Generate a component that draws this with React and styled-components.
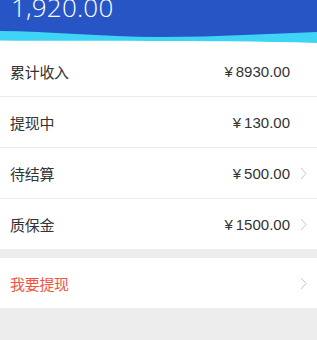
import React from "react";
import styled, { createGlobalStyle } from "styled-components";

const GlobalStyle = createGlobalStyle`
  html, body {
    margin: 0;
    padding: 0;
    background: #efefef;
  }
  body {
    font-family: "Liberation Sans", "Noto Sans CJK SC", sans-serif;
  }
`;

const Page = styled.div`
  width: 317px;
  height: 340px;
  overflow: hidden;
  background: #ededed;
`;

const Header = styled.div`
  position: relative;
  height: 46px;
  overflow: hidden;
  background: #fff;
`;

const Wave = styled.svg`
  position: absolute;
  left: 0;
  top: 0;
  width: 317px;
  height: 46px;
`;

const Total = styled.div`
  position: relative;
  margin: -8px 0 0 11px;
  font-family: "Open Sans", "Liberation Sans", sans-serif;
  font-weight: 300;
  font-size: 26px;
  line-height: 30px;
  color: #fff;
  letter-spacing: 0.2px;
`;

const Group = styled.div`
  background: #fff;
  margin-bottom: ${(p) => p.$gap || 0}px;
`;

const Row = styled.div`
  display: flex;
  align-items: center;
  height: 50px;
  padding: 0 10px;
  border-bottom: ${(p) => (p.$last ? "none" : "1px solid #ececec")};
`;

const Label = styled.span`
  flex: 1;
  font-size: 15px;
  letter-spacing: -0.3px;
  color: ${(p) => (p.$accent ? "#f4533f" : "#333")};
`;

const Amount = styled.span`
  font-size: 15px;
  color: #333;
`;

const Yen = styled.span`
  margin-right: 3px;
`;

const Chevron = styled.span`
  width: 17px;
  display: flex;
  justify-content: flex-end;
  svg {
    display: block;
  }
`;

const Arrow = ({ show }) => (
  <Chevron>
    {show && (
      <svg width="7" height="13" viewBox="0 0 7 13">
        <path d="M1 1 L6 6.5 L1 12" fill="none" stroke="#c8c8c8" strokeWidth="1" />
      </svg>
    )}
  </Chevron>
);

const items = [
  { label: "累计收入", value: "8930.00", arrow: false },
  { label: "提现中", value: "130.00", arrow: false },
  { label: "待结算", value: "500.00", arrow: true },
  { label: "质保金", value: "1500.00", arrow: true },
];

export default function App() {
  return (
    <Page>
      <GlobalStyle />
      <Header>
        <Wave viewBox="0 0 317 46" preserveAspectRatio="none">
          <path
            d="M0 0 H317 V43 C260 41 200 41.5 150 41 C90 40.5 40 41 0 40.5 Z"
            fill="#3fd3f6"
          />
          <path
            d="M0 0 H317 V32 C270 33.5 220 37 160 37 C100 37 50 31 0 31 Z"
            fill="#2755c5"
          />
        </Wave>
        <Total>1,920.00</Total>
      </Header>
      <Group $gap={9}>
        {items.map((it, i) => (
          <Row key={it.label} $last={i === items.length - 1}>
            <Label>{it.label}</Label>
            <Amount>
              <Yen>¥</Yen>
              {it.value}
            </Amount>
            <Arrow show={it.arrow} />
          </Row>
        ))}
      </Group>
      <Group>
        <Row $last>
          <Label $accent>我要提现</Label>
          <Arrow show />
        </Row>
      </Group>
    </Page>
  );
}
